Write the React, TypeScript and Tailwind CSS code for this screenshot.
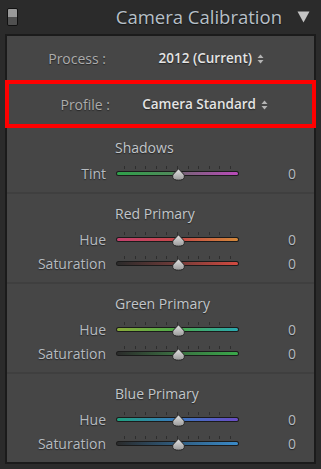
import React from "react";

type SliderProps = { track: string };

const fontStack = { fontFamily: '"Open Sans", "Noto Sans", sans-serif' };

const Thumb = () => (
  <svg width="15" height="13" viewBox="0 0 15 13" className="block">
    <defs>
      <linearGradient id="thumbFill" x1="0" y1="0" x2="0" y2="1">
        <stop offset="0" stopColor="#e2e2e2" />
        <stop offset="1" stopColor="#9a9a9a" />
      </linearGradient>
    </defs>
    <path
      d="M7.5 0.8 L12.6 6.2 Q13.8 7.6 13.2 9.6 Q12.4 12.2 7.5 12.2 Q2.6 12.2 1.8 9.6 Q1.2 7.6 2.4 6.2 Z"
      fill="url(#thumbFill)"
      stroke="#232323"
      strokeWidth="1"
    />
  </svg>
);

// 目盛り付きのスライダー
const Slider = ({ track }: SliderProps) => {
  return (
    <div className="relative w-[123px] h-[16px]">
      <div className="absolute left-[8px] right-[8px] top-[1px] flex justify-between">
        {Array.from({ length: 11 }).map((_, i) => (
          <span key={i} className="block w-px h-[3px] bg-[#2e2e2e]" />
        ))}
      </div>
      <div className="absolute left-0 right-0 top-[6px] h-[5px] rounded-full bg-[#1b1b1b] p-px">
        <div className="h-full rounded-full" style={{ background: track }} />
      </div>
      <div className="absolute left-[55px] top-[3px]">
        <Thumb />
      </div>
    </div>
  );
};

const SliderRow = ({ label, track }: { label: string; track: string }) => (
  <div className="flex items-center h-[24px]">
    <div className="w-[99px] text-right text-[14px] text-[#b6bbc0] [text-shadow:0_1px_1px_#262626]">{label}</div>
    <div className="ml-[10px]">
      <Slider track={track} />
    </div>
    <div className="w-[57px] text-right text-[14px] text-[#b6bbc0] [text-shadow:0_1px_1px_#262626]">0</div>
  </div>
);

const Section = ({
  title,
  rows,
  last,
}: {
  title: string;
  rows: { label: string; track: string }[];
  last?: boolean;
}) => (
  <div className={`pt-[7px] pb-[7px] ${last ? "" : "border-b-2 border-b-[#3f3f3f]"}`}>
    <div className="h-[26px] leading-[26px] pl-[108px] text-[14px] text-[#c2c6ca] [text-shadow:0_1px_1px_#262626]">
      {title}
    </div>
    {rows.map((r) => (
      <SliderRow key={r.label} label={r.label} track={r.track} />
    ))}
  </div>
);

const UpDown = () => (
  <svg width="7" height="10" viewBox="0 0 7 10" className="ml-[5px] mt-[1px]">
    <path d="M3.5 0.5 L6.5 4 L0.5 4 Z" fill="#b4b4b4" />
    <path d="M3.5 9.5 L6.5 6 L0.5 6 Z" fill="#b4b4b4" />
  </svg>
);

const PopupRow = ({ label, value }: { label: string; value: string }) => (
  <div className="flex items-center h-full">
    <div className="w-[99px] text-right text-[14px] text-[#acacac] [text-shadow:0_1px_1px_#262626]">{label}</div>
    <div className="w-[158px] flex items-center justify-end text-[13.5px] font-semibold text-[#e4e4e4] [text-shadow:0_1px_1px_#262626]">
      {value}
      <UpDown />
    </div>
  </div>
);

export default function App() {
  return (
    <div className="w-[321px] h-[469px] bg-[#2b2b2b] overflow-hidden" style={fontStack}>
      {/* ヘッダー */}
      <div className="h-[34px] flex items-center pl-[7px] pr-[11px]">
        <div className="w-[11px] h-[18px] rounded-[2px] border border-[#111] overflow-hidden flex flex-col">
          <div className="flex-1 bg-[#9a9a9a]" />
          <div className="flex-1 bg-[#505050]" />
        </div>
        <div className="flex-1 text-right text-[18.5px] text-[#b8c0c8] pr-[15px] [text-shadow:0_1px_1px_#151515]">
          Camera Calibration
        </div>
        <svg width="13" height="12" viewBox="0 0 13 12">
          <path d="M0.5 0.5 L12.5 0.5 L6.5 11.5 Z" fill="#c4c4c4" />
        </svg>
      </div>

      {/* パネル */}
      <div className="mx-[5px] h-[430px] border-2 border-[#1b1b1b] bg-[#464646]">
        <div className="h-[44px]">
          <PopupRow label="Process :" value="2012 (Current)" />
        </div>
        <div className="-mx-[2px] h-[48px] border-4 border-[#ff0000] pl-[2px]">
          <PopupRow label="Profile :" value="Camera Standard" />
        </div>
        <Section
          title="Shadows"
          rows={[
            { label: "Tint", track: "linear-gradient(to right,#2fa04a,#4f8a5a 45%,#7a627a 55%,#b94ab9)" },
          ]}
        />
        <Section
          title="Red Primary"
          rows={[
            { label: "Hue", track: "linear-gradient(to right,#c2416e,#c64848 50%,#d2883a)" },
            { label: "Saturation", track: "linear-gradient(to right,#2a2a2a,#6a3a38 45%,#d24a40)" },
          ]}
        />
        <Section
          title="Green Primary"
          rows={[
            { label: "Hue", track: "linear-gradient(to right,#8aaa3a,#4caa4a 50%,#2aa8b0)" },
            { label: "Saturation", track: "linear-gradient(to right,#2a2a2a,#3a6a40 45%,#3aa84a)" },
          ]}
        />
        <Section
          title="Blue Primary"
          last
          rows={[
            { label: "Hue", track: "linear-gradient(to right,#20a07e,#3a78c0 50%,#6a4cc4)" },
            { label: "Saturation", track: "linear-gradient(to right,#2a2a2a,#2f5878 45%,#3a8ac8)" },
          ]}
        />
      </div>
    </div>
  );
}
